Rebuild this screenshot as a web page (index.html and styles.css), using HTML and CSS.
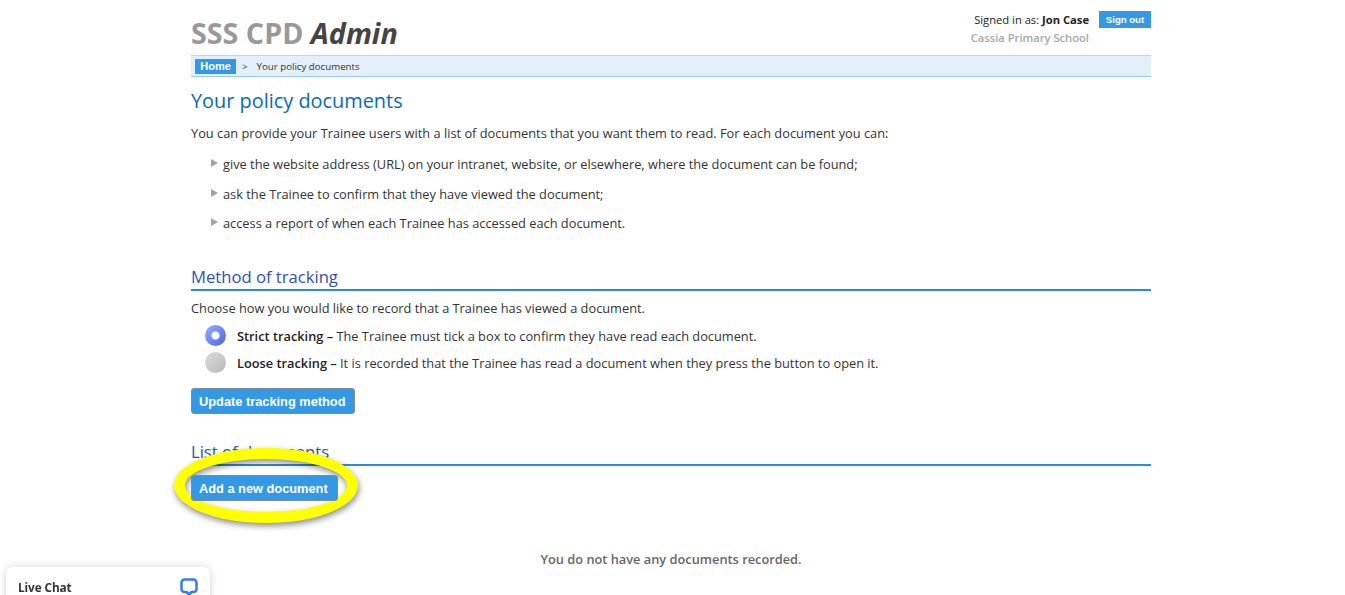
FILE: index.html
```html
<!DOCTYPE html>
<html lang="en">
<head>
<meta charset="utf-8">
<title>Your policy documents</title>
<link rel="stylesheet" href="styles.css">
</head>
<body>
<div class="page">
  <header class="top">
    <div class="brand">SSS CPD <em>Admin</em></div>
    <div class="account">
      <div class="account-text">
        <div class="signed">Signed in as: <b>Jon Case</b></div>
        <div class="school">Cassia Primary School</div>
      </div>
      <a class="signout">Sign out</a>
    </div>
  </header>
  <nav class="crumbs"><a class="home">Home</a><span class="sep">&gt;</span><span>Your policy documents</span></nav>
  <main>
    <h1>Your policy documents</h1>
    <p class="intro">You can provide your Trainee users with a list of documents that you want them to read. For each document you can:</p>
    <ul class="points">
      <li>give the website address (URL) on your intranet, website, or elsewhere, where the document can be found;</li>
      <li>ask the Trainee to confirm that they have viewed the document;</li>
      <li>access a report of when each Trainee has accessed each document.</li>
    </ul>
    <h2 class="method">Method of tracking</h2>
    <p class="choose">Choose how you would like to record that a Trainee has viewed a document.</p>
    <div class="radio-row"><span class="radio on"></span><span><b>Strict tracking –</b> The Trainee must tick a box to confirm they have read each document.</span></div>
    <div class="radio-row"><span class="radio"></span><span><b>Loose tracking –</b> It is recorded that the Trainee has read a document when they press the button to open it.</span></div>
    <button class="btn update">Update tracking method</button>
    <h2 class="list">List of documents</h2>
    <div class="add-wrap">
      <button class="btn">Add a new document</button>
      <svg class="highlight" width="192" height="84" viewBox="0 0 192 84">
        <path fill="#ffff00" fill-rule="evenodd" d="M0 39.500A92 37.500 0 0 1 184 39.500 92 37.500 0 0 1 0 39.500ZM11 39.500A81 26.500 0 0 0 173 39.500 81 26.500 0 0 0 11 39.500Z"/>
      </svg>
    </div>
    <p class="none">You do not have any documents recorded.</p>
  </main>
</div>
<aside class="chat">
  <span class="chat-label">Live Chat</span>
  <svg class="chat-icon" width="18" height="18" viewBox="0 0 18 18"><path d="M4.500 1.500h9a3 3 0 0 1 3 3v6.500a3 3 0 0 1-3 3h-2L9 16.500 6.500 14h-2a3 3 0 0 1-3-3V4.500a3 3 0 0 1 3-3z" fill="none" stroke="#2f7df0" stroke-width="2.500" stroke-linejoin="round"/></svg>
</aside>
</body>
</html>
```
FILE: styles.css
```css
html, body { margin: 0; padding: 0; background: #fff; }
body { font-family: "Open Sans", "Liberation Sans", sans-serif; font-size: 12.8px; color: #333; height: 595px; overflow: hidden; }
.page { width: 960px; margin-left: 191px; }
.top { display: flex; justify-content: space-between; height: 55px; }
.brand { font-size: 28.700px; font-weight: 700; line-height: 40px; padding-top: 13px; color: #999; }
.brand em { color: #444; }
.account { display: flex; gap: 10px; padding-top: 11px; align-items: flex-start; }
.account-text { text-align: right; font-size: 11.2px; line-height: 18px; color: #222; }
.school { color: #a6a6a6; font-weight: 600; }
.signout { background: #3399e6; color: #fff; font: bold 9.600px/17px "Liberation Sans", sans-serif; width: 52px; text-align: center; white-space: nowrap; }
.crumbs { box-sizing: border-box; height: 22px; background: #e3f0fb; border-top: 1px solid #b5d5f0; border-bottom: 1px solid #9ccbf5; display: flex; align-items: center; padding-left: 4px; font-size: 9.700px; color: #333; }
.home { background: #3399e6; color: #fff; font: bold 11px/15px "Liberation Sans", sans-serif; width: 41px; text-align: center; }
.sep { margin: 0 9px 0 6px; }
h1 { font-size: 19.900px; color: #0d68b5; margin: 10px 0 0; line-height: 27px; font-weight: 500; }
.intro { margin: 10px 0 0; line-height: 18px; }
.points { list-style: none; margin: 13px 0 0; padding: 0 0 0 20px; }
.points li { position: relative; padding-left: 12px; line-height: 18px; margin-bottom: 11.500px; }
.points li::before { content: ""; position: absolute; left: 0; top: 4px; border-left: 7px solid #a3a3a3; border-top: 4px solid transparent; border-bottom: 4px solid transparent; }
h2 { font-size: 16.640px; font-weight: 500; color: #2f52b0; margin: 0; line-height: 22px; border-bottom: 2px solid #2a8be0; padding-bottom: 1px; }
.method { margin-top: 34px; }
.choose { margin: 8px 0 0; line-height: 18px; }
.radio-row { display: flex; align-items: center; height: 27px; padding-left: 14px; gap: 11px; color: #333; }
.radio-row:first-of-type { margin-top: 5px; }
.radio-row b { font-weight: 600; color: #222; }
.radio { width: 21px; height: 21px; border-radius: 50%; background: linear-gradient(135deg, #dcdcdc, #b8b8b8); }
.radio.on { background: radial-gradient(circle, #fff 0 3px, rgba(255,255,255,0) 5px), linear-gradient(135deg, #9aaefa, #4a64e6); }
.btn { display: block; position: relative; z-index: 1; border: 1px solid #7d8b99; border-radius: 3px; background: #3399e6; color: #fff; font: bold 12.800px/16px "Liberation Sans", sans-serif; padding: 5px 9px 3px 7px; height: 26px; margin: 0; }
.update { margin-top: 12px; }
.list { margin-top: 27px; }
.add-wrap { position: relative; margin-top: 9px; height: 26px; }
.highlight { position: absolute; left: -17px; top: -29px; filter: drop-shadow(1px 3px 3px rgba(0,0,0,.45)); }
.none { margin: 49px 0 0; text-align: center; font-weight: 600; color: #666; line-height: 18px; }
.chat { position: fixed; left: 6px; top: 567px; width: 204px; height: 40px; box-sizing: border-box; background: #fff; border-radius: 6px; box-shadow: 0 0 8px rgba(0,0,0,.18); display: flex; justify-content: space-between; padding: 11px 12px; }
.chat-label { font-size: 11.800px; font-weight: 700; color: #333; padding-top: 1px; letter-spacing: -0.1px; }
```
